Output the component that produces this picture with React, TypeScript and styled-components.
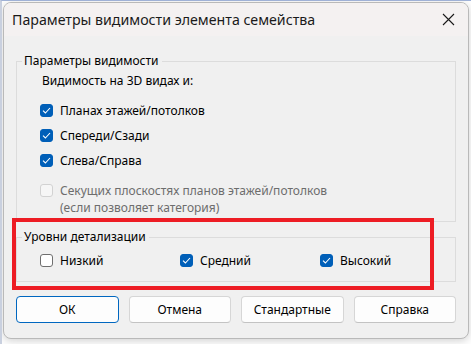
import React from 'react'
import styled, { createGlobalStyle } from 'styled-components'

const GlobalStyle = createGlobalStyle`
  html, body {
    margin: 0;
    padding: 0;
    background: #ffffff;
  }
  body {
    font-family: 'Noto Sans', 'Open Sans', 'Liberation Sans', sans-serif;
    font-size: 12px;
    color: #000;
  }
`

const Desktop = styled.div`
  position: relative;
  width: 471px;
  height: 344px;
  overflow: hidden;
  background: #ffffff;
  border-left: 2px solid #c9d0df;
  border-top: 1px solid #9fb1d6;
  box-sizing: border-box;
`

const Dialog = styled.div`
  position: relative;
  margin: 1px 0 0 1px;
  width: 466px;
  height: 337px;
  box-sizing: border-box;
  border: 1px solid #b9b9b9;
  border-radius: 8px;
  background: #f0f0f0;
  box-shadow: 0 2px 8px rgba(0, 0, 0, 0.18);
  overflow: hidden;
  display: flex;
  flex-direction: column;
`

const TitleBar = styled.div`
  height: 33px;
  flex: none;
  display: flex;
  align-items: center;
  justify-content: space-between;
  padding: 0 13px 0 8px;
  background: #f4f1f1;
`

const Title = styled.span`
  font-size: 14.2px;
  color: #1a1a1a;
`

const CloseButton = styled.span`
  display: flex;
  width: 14px;
  height: 14px;
  align-items: center;
  justify-content: center;
`

const Body = styled.div`
  flex: 1;
  display: flex;
  flex-direction: column;
  padding: 17px 12px 0;
`

const Group = styled.fieldset<{ $pad: string }>`
  margin: 0;
  padding: ${p => p.$pad};
  border: 1px solid #dcdcdc;
  border-radius: 0;
  min-width: 0;
  & + & {
    margin-top: 7px;
  }
`

const Legend = styled.legend`
  margin-left: -18px;
  padding: 0 3px 0 2px;
  font-size: 12px;
  line-height: 16px;
  color: #000;
`

const Caption = styled.div`
  line-height: 16px;
  height: 16px;
  margin: 4px 0 9px 2px;
`

const Row = styled.label<{ $disabled?: boolean }>`
  display: flex;
  align-items: flex-start;
  gap: 7px;
  min-height: 25px;
  line-height: 17px;
  color: ${p => (p.$disabled ? '#6d6d6d' : '#000')};
`

const DisabledRow = styled(Row)`
  margin-top: 5px;
`

const RowText = styled.span`
  padding-top: 4px;
`

const Box = styled.span<{ $checked?: boolean; $disabled?: boolean }>`
  flex: none;
  width: 13px;
  height: 13px;
  margin-top: 6px;
  box-sizing: border-box;
  border-radius: 3px;
  display: flex;
  align-items: center;
  justify-content: center;
  background: ${p => (p.$checked ? '#005fb8' : p.$disabled ? '#f6f6f6' : '#ffffff')};
  border: 1px solid ${p => (p.$checked ? '#005fb8' : p.$disabled ? '#d2d2d2' : '#6f6f6f')};
`

const LevelRow = styled.div`
  display: grid;
  grid-template-columns: 140px 140px 1fr;
  padding-bottom: 2px;
`

const Buttons = styled.div`
  display: grid;
  grid-template-columns: repeat(4, 1fr);
  gap: 10px;
  margin-top: 14px;
`

const Button = styled.button<{ $primary?: boolean }>`
  height: 27px;
  margin: 0;
  padding: 0;
  font-family: inherit;
  font-size: 12px;
  color: #000;
  background: #fdfdfd;
  border: 1px solid ${p => (p.$primary ? '#0067c0' : '#d6d6d6')};
  border-bottom-color: ${p => (p.$primary ? '#0067c0' : '#c3c3c3')};
  border-radius: 4px;
`

const Highlight = styled.div`
  position: absolute;
  left: 8px;
  top: 215px;
  width: 422px;
  height: 72px;
  box-sizing: border-box;
  border: 4px solid #ed1c24;
  pointer-events: none;
`

function Check({ checked, disabled }: { checked?: boolean; disabled?: boolean }) {
  return (
    <Box $checked={checked} $disabled={disabled}>
      {checked && (
        <svg width="9" height="7" viewBox="0 0 9 7">
          <path d="M1 3.6 L3.4 6 L8 1" fill="none" stroke="#fff" strokeWidth="1.1" />
        </svg>
      )}
    </Box>
  )
}

const views = ['Планах этажей/потолков', 'Спереди/Сзади', 'Слева/Справа']

const levels = [
  { title: 'Низкий', checked: false },
  { title: 'Средний', checked: true },
  { title: 'Высокий', checked: true }
]

export default function App() {
  return (
    <>
      <GlobalStyle />
      <Desktop>
        <Dialog>
          <TitleBar>
            <Title>Параметры видимости элемента семейства</Title>
            <CloseButton>
              <svg width="13" height="13" viewBox="0 0 13 13">
                <path d="M1 1 L12 12 M12 1 L1 12" stroke="#1a1a1a" strokeWidth="1.1" />
              </svg>
            </CloseButton>
          </TitleBar>
          <Body>
            <Group $pad="0 8px 5px 23px">
              <Legend>Параметры видимости</Legend>
              <Caption>Видимость на 3D видах и:</Caption>
              {views.map(v => (
                <Row key={v}>
                  <Check checked />
                  <RowText>{v}</RowText>
                </Row>
              ))}
              <DisabledRow $disabled>
                <Check disabled />
                <RowText>
                  Секущих плоскостях планов этажей/потолков
                  <br />
                  (если позволяет категория)
                </RowText>
              </DisabledRow>
            </Group>
            <Group $pad="3px 8px 6px 23px">
              <Legend>Уровни детализации</Legend>
              <LevelRow>
                {levels.map(l => (
                  <Row key={l.title}>
                    <Check checked={l.checked} />
                    <RowText>{l.title}</RowText>
                  </Row>
                ))}
              </LevelRow>
            </Group>
            <Buttons>
              <Button $primary>ОК</Button>
              <Button>Отмена</Button>
              <Button>Стандартные</Button>
              <Button>Справка</Button>
            </Buttons>
          </Body>
          <Highlight />
        </Dialog>
      </Desktop>
    </>
  )
}
